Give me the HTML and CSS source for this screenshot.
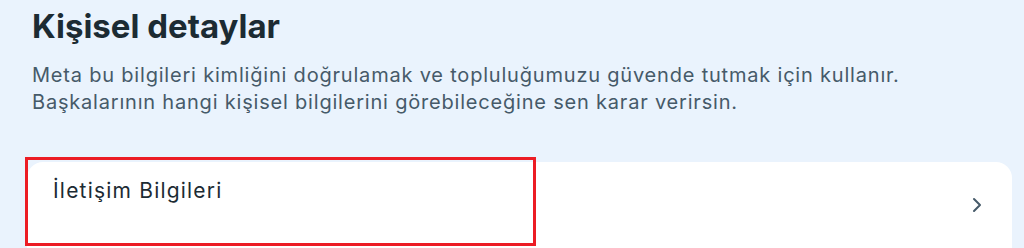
FILE: index.html
```html
<!DOCTYPE html>
<html lang="tr">
<head>
<meta charset="utf-8">
<link rel="stylesheet" href="styles.css">
</head>
<body>
<main class="page">
  <h1 class="title">Kişisel detaylar</h1>
  <p class="desc">Meta bu bilgileri kimliğini doğrulamak ve topluluğumuzu güvende tutmak için kullanır.<br>Başkalarının hangi kişisel bilgilerini görebileceğine sen karar verirsin.</p>
  <section class="card">
    <div class="row">
      <span class="row-label">İletişim Bilgileri</span>
      <svg class="chev" width="14" height="16" viewBox="0 0 14 16"><path d="M4 2 L10 8 L4 14" fill="none" stroke="#465a69" stroke-width="2" stroke-linecap="round" stroke-linejoin="round"/></svg>
    </div>
    <div class="highlight"></div>
  </section>
</main>
</body>
</html>
```
FILE: styles.css
```css
html, body {
  margin: 0;
  padding: 0;
  height: 100%;
  overflow: hidden;
}
body {
  background: #eaf3fd;
  font-family: Inter, "Open Sans", sans-serif;
}
.page {
  padding: 4px 0 0 32px;
  display: flex;
  flex-direction: column;
}
.title {
  margin: 0;
  font-size: 33px;
  line-height: 44px;
  font-weight: 700;
  color: #1c2b33;
  letter-spacing: 0;
}
.desc {
  margin: 14px 0 0;
  font-size: 20px;
  line-height: 27px;
  color: #465a69;
  letter-spacing: 0.8px;
}
.card {
  position: relative;
  margin: 46px 12px 0 -5px;
  background: #fff;
  border-radius: 16px;
  height: 140px;
}
.row {
  display: flex;
  align-items: flex-start;
  justify-content: space-between;
  padding: 15px 28px 0 26px;
}
.row-label {
  font-size: 21px;
  line-height: 27px;
  color: #1c2b33;
  letter-spacing: 1.2px;
}
.chev {
  margin-top: 20px;
}
.highlight {
  position: absolute;
  left: -2px;
  top: -5px;
  width: 505px;
  height: 83px;
  border: 3px solid #ec1c24;
}
```
